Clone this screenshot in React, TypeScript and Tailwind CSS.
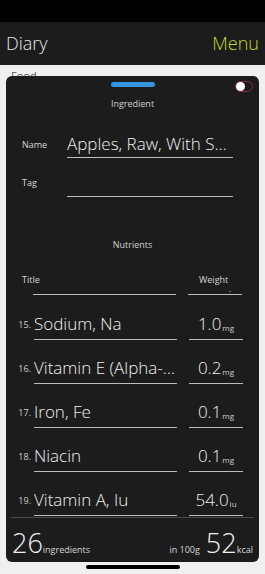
import React from 'react';

type Nutrient = {
  index: number;
  title: string;
  amount: string;
  unit: string;
};

const NUTRIENTS: Nutrient[] = [
  {index: 15, title: 'Sodium, Na', amount: '1.0', unit: 'mg'},
  {index: 16, title: 'Vitamin E (Alpha-Tocopherol)', amount: '0.2', unit: 'mg'},
  {index: 17, title: 'Iron, Fe', amount: '0.1', unit: 'mg'},
  {index: 18, title: 'Niacin', amount: '0.1', unit: 'mg'},
  {index: 19, title: 'Vitamin A, Iu', amount: '54.0', unit: 'iu'},
];

const font = {fontFamily: '"Open Sans", "Noto Sans", sans-serif'};

const NutrientRow: React.FC<{item: Nutrient}> = ({item}) => (
  <div className="flex h-[44px] items-end">
    <div className="w-[28px] shrink-0 pb-[8px] pr-[3px] text-right text-[9px] text-[#cfcfcf]">{item.index}.</div>
    <div className="w-[143px] min-w-0 border-b border-[#bdbdbd] pb-[4px]">
      <div className="truncate text-[17px] font-light leading-[22px] text-[#f0f0f0]">{item.title}</div>
    </div>
    <div className="ml-[12px] flex w-[54px] items-end justify-center border-b border-[#bdbdbd] pb-[4px]">
      <span className="text-[17px] font-light leading-[22px] text-[#f0f0f0]">{item.amount}</span>
      <span className="mb-[1px] ml-[1px] text-[8px] text-[#d0d0d0]">{item.unit}</span>
    </div>
  </div>
);

export default function App() {
  return (
    <div className="flex h-[574px] w-[265px] flex-col overflow-hidden bg-[#f0f0f0]" style={font}>
      {/* status bar */}
      <div className="h-[22px] bg-black" />

      {/* nav bar */}
      <div className="flex h-[43px] items-center justify-between bg-[#1c1c1c] px-[6px]">
        <span className="text-[18px] font-light text-[#e8e8e8]">Diary</span>
        <span className="text-[18px] font-light text-[#c3d932]">Menu</span>
      </div>

      {/* sheet */}
      <div className="relative flex-1 px-[6px] pt-[11px]">
        <div className="absolute left-[11px] top-[3px] text-[11px] text-[#555]">Food</div>
        <div className="relative flex h-[486px] flex-col overflow-hidden rounded-[6px] bg-[#1c1c1c]">
          <div className="relative flex justify-center pt-[6px]">
            <div className="h-[5px] w-[44px] rounded-full bg-[#3596e0]" />
            <div className="absolute right-[6px] top-[5px] flex h-[11px] w-[18px] items-center rounded-full border border-[#8a2b45] bg-[#1c1c1c]">
              <div className="h-[9px] w-[9px] rounded-full bg-white" />
            </div>
          </div>

          <div className="flex-1 overflow-hidden">
            <div className="mt-[10px] text-center text-[9px] text-[#cfcfcf]">Ingredient</div>

            <div className="mt-[22px] flex items-end pl-[16px] pr-[26px]">
              <div className="w-[45px] shrink-0 pb-[6px] text-[9px] text-[#d6d6d6]">Name</div>
              <div className="min-w-0 flex-1 border-b border-[#bdbdbd] pb-[2px]">
                <div className="truncate text-[17px] font-light leading-[22px] text-[#f0f0f0]">Apples, Raw, With Skin</div>
              </div>
            </div>

            <div className="mt-[14px] flex items-end pl-[16px] pr-[26px]">
              <div className="w-[45px] shrink-0 pb-[7px] text-[9px] text-[#d6d6d6]">Tag</div>
              <div className="h-[25px] flex-1 border-b border-[#bdbdbd]" />
            </div>

            <div className="mt-[41px] text-center text-[9px] text-[#cfcfcf]">Nutrients</div>

            <div className="mt-[22px] flex pl-[16px]">
              <div className="w-[177px] text-[9px] text-[#d6d6d6]">Title</div>
              <div className="text-[9px] text-[#d6d6d6]">Weight</div>
            </div>
            <div className="flex items-end">
              <div className="ml-[27px] h-[8px] w-[143px] border-b border-[#bdbdbd]" />
              <div className="relative ml-[12px] h-[8px] w-[54px] border-b border-[#bdbdbd]">
                <div className="absolute top-[0px] right-[11px] text-[7px] leading-none text-[#bdbdbd]">-</div>
              </div>
            </div>

            <div className="mt-[1px]">
              {NUTRIENTS.map(item => (
                <NutrientRow item={item} key={item.index} />
              ))}
            </div>
          </div>

          {/* footer */}
          <div className="mx-[5px] flex h-[45px] shrink-0 items-center justify-between border-t border-[#4a4a4a] px-[1px] pt-[6px]">
            <div className="flex items-baseline">
              <span className="text-[27px] font-light leading-none text-[#f0f0f0]">26</span>
              <span className="text-[9px] text-[#d6d6d6]">ingredients</span>
            </div>
            <div className="flex items-baseline">
              <span className="mr-[6px] text-[9px] text-[#d6d6d6]">in 100g</span>
              <span className="text-[27px] font-light leading-none text-[#f0f0f0]">52</span>
              <span className="text-[9px] text-[#d6d6d6]">kcal</span>
            </div>
          </div>
        </div>

        <div className="mx-auto mt-[3px] h-[4px] w-[94px] rounded-full bg-black" />
      </div>
    </div>
  );
}
